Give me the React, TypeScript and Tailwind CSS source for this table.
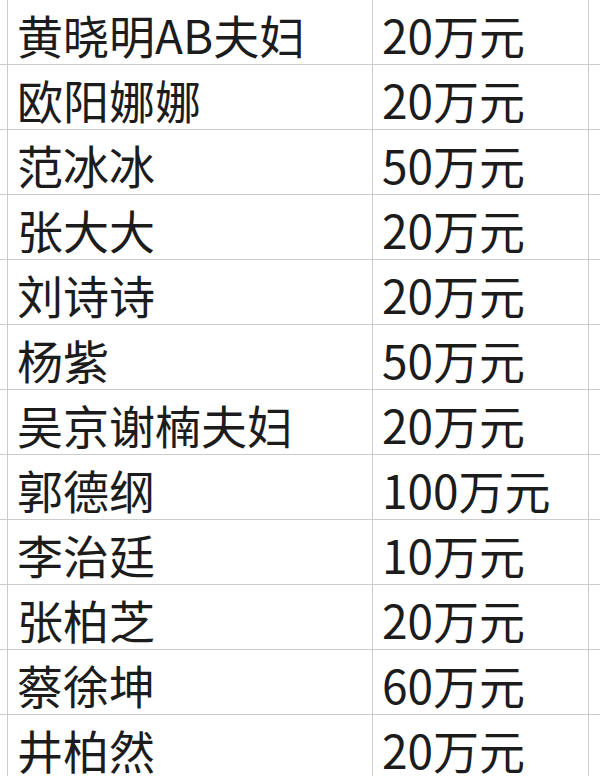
import React from "react";

const rows: [string, string][] = [
  ["黄晓明AB夫妇", "20万元"],
  ["欧阳娜娜", "20万元"],
  ["范冰冰", "50万元"],
  ["张大大", "20万元"],
  ["刘诗诗", "20万元"],
  ["杨紫", "50万元"],
  ["吴京谢楠夫妇", "20万元"],
  ["郭德纲", "100万元"],
  ["李治廷", "10万元"],
  ["张柏芝", "20万元"],
  ["蔡徐坤", "60万元"],
  ["井柏然", "20万元"],
];

export default function App() {
  return (
    <div
      className="w-[600px] h-[776px] overflow-hidden bg-white text-[#1c1c1c]"
      style={{ fontFamily: '"Noto Sans CJK SC", "Noto Sans", sans-serif' }}
    >
      {rows.map(([name, amount], i) => (
        <div key={i} className="flex h-[65px]">
          <div className="w-[8px] shrink-0 border-r border-b border-[#cccccc]" />
          <div className="w-[365px] shrink-0 border-r border-b border-[#cccccc] flex items-center pl-[9px] pt-[4px] text-[46px] leading-[58px] whitespace-nowrap">
            {name}
          </div>
          <div className="w-[216px] shrink-0 border-r border-b border-[#cccccc] flex items-center pl-[9px] pt-[4px] text-[46px] leading-[58px] whitespace-nowrap">
            {amount}
          </div>
          <div className="flex-1 border-b border-[#cccccc]" />
        </div>
      ))}
    </div>
  );
}
